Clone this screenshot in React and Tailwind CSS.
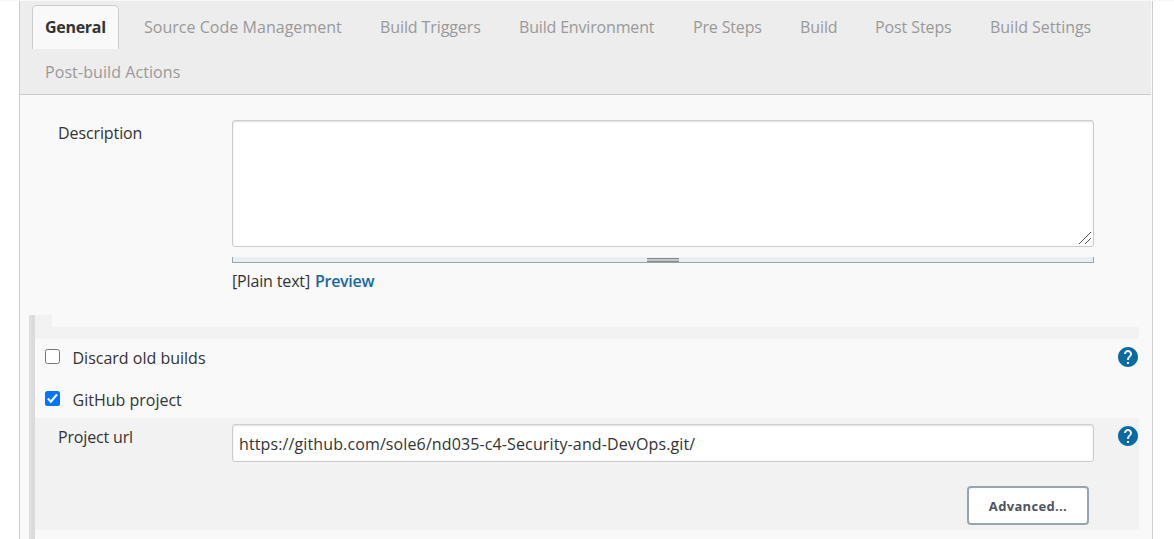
import React from "react";

const tabs = [
  { label: "Source Code Management", cls: "w-[236px] tracking-[0.03px]" },
  { label: "Build Triggers", cls: "w-[139px] tracking-[-0.1px]" },
  { label: "Build Environment", cls: "w-[174px] tracking-[-0.17px]" },
  { label: "Pre Steps", cls: "w-[107px] tracking-[-0.16px]" },
  { label: "Build", cls: "w-[75px] tracking-[-0.1px]" },
  { label: "Post Steps", cls: "w-[115px] tracking-[-0.1px]" },
  { label: "Build Settings", cls: "w-[120px] tracking-[-0.02px]" },
];

function HelpIcon() {
  return (
    <svg className="block size-5 shrink-0" viewBox="2 2 20 20" aria-hidden="true">
      <path
        fill="#0b6aa2"
        d="M12 2C6.48 2 2 6.48 2 12s4.48 10 10 10 10-4.48 10-10S17.52 2 12 2zm1 17h-2v-2h2v2zm2.07-7.75-.9.92C13.45 12.9 13 13.5 13 15h-2v-.5c0-1.1.45-2.1 1.17-2.83l1.24-1.26c.37-.36.59-.86.59-1.41 0-1.1-.9-2-2-2s-2 .9-2 2H8c0-2.21 1.79-4 4-4s4 1.79 4 4c0 .88-.36 1.68-.93 2.25z"
      />
    </svg>
  );
}

function Checkbox({ checked }) {
  return checked ? (
    <span className="flex size-[15px] shrink-0 items-center justify-center rounded-[2.5px] bg-[#0075ff]">
      <svg className="size-[15px]" viewBox="0 0 15 15" fill="none" stroke="#fff" strokeWidth="2.2">
        <path d="M2.9 7.6 5.9 10.7 12 3.4" />
      </svg>
    </span>
  ) : (
    <span className="block size-[15px] shrink-0 rounded-[2.5px] border border-[#767676] bg-white" />
  );
}

export default function App() {
  return (
    <div className="flex h-[539px] w-[1174px] flex-col overflow-hidden bg-white font-['Open_Sans','Noto_Sans',sans-serif] text-[16px] leading-6 text-[#333]">
      <div className="h-px shrink-0 bg-[#f8f8f8]" />
      <main className="ml-[19px] flex h-[538px] w-[1134px] flex-col border-x border-[#ccc] bg-[#f9f9f9]">
        <nav className="mr-px h-[94px] shrink-0 border-b border-[#ccc] bg-[#ededed] pt-1 text-[#999]">
          <div className="flex h-11 whitespace-nowrap">
            <div className="ml-3 h-11 w-[87px] rounded-t-[5px] border border-b-0 border-[#ccc] bg-[#f9f9f9] pl-3 pt-[9px] font-bold tracking-[-0.3px] text-[#333]">
              General
            </div>
            <div className="ml-[25px] flex pt-[10px]">
              {tabs.map((t) => (
                <div key={t.label} className={t.cls}>{t.label}</div>
              ))}
            </div>
          </div>
          <div className="pl-[25px] pt-[11px] tracking-[0.08px]">Post-build Actions</div>
        </nav>

        <section className="flex h-[220px] shrink-0 pt-[25px]">
          <div className="w-[212px] pl-[38px] pt-px tracking-[-0.1px]">Description</div>
          <div className="w-[862px]">
            <div className="flex h-[127px] items-end justify-end rounded-[3px] border border-[#ccc] bg-white p-px shadow-[inset_0_1px_2px_rgba(0,0,0,0.12)]">
              <svg className="size-[14px]" viewBox="0 0 14 14" fill="none" stroke="#555" strokeWidth="1">
                <path d="M1 13 13 1M7 13 13 7" />
              </svg>
            </div>
            <div className="mt-[10px] flex h-[6px] justify-center border border-t-0 border-[#98a5ad] bg-[#e8eef1] pt-px">
              <div className="h-1 w-8 border-y border-[#858b8b] bg-[#c3c7c7]" />
            </div>
            <div className="mt-[6px] flex gap-[5px] whitespace-nowrap">
              <span className="w-[78px] tracking-[-0.15px]">[Plain text]</span>
              <span className="font-semibold tracking-[-0.3px] text-[#1868a0]">Preview</span>
            </div>
          </div>
        </section>

        <section className="ml-[9px] flex h-[224px] w-[1110px] shrink-0">
          <div className="w-[3px] bg-[#dfdfdf]" />
          <div className="w-[3px] bg-[#dbdbdb]" />
          <div className="w-[1104px]">
            <div className="h-6 bg-[#f2f2f2] pl-[17px]">
              <div className="h-3 bg-[#f9f9f9]" />
            </div>
            <div className="flex h-[37px] pl-[10px] pt-2">
              <div className="pt-[2px]"><Checkbox /></div>
              <div className="-mt-px ml-[12.5px] w-[1045.5px] tracking-[0px]">Discard old builds</div>
              <HelpIcon />
            </div>
            <div className="flex h-[42px] pl-[10px] pt-[13px]">
              <div className="pt-[2px]"><Checkbox checked /></div>
              <div className="-mt-px ml-[12.5px] tracking-[0px]">GitHub project</div>
            </div>
            <div className="h-28 bg-[#f2f2f2] pt-[6px]">
              <div className="flex">
                <div className="w-[197px] pl-[23px] pt-px tracking-[-0.16px]">Project url</div>
                <div className="h-[38px] w-[862px] rounded-[3px] border border-[#ccc] bg-white pl-[6px] pt-[7px] tracking-[0.12px] shadow-[inset_0_1px_2px_rgba(0,0,0,0.12)]">
                  https://github.com/sole6/nd035-c4-Security-and-DevOps.git/
                </div>
                <div className="ml-6 pt-[2px]"><HelpIcon /></div>
              </div>
              <div className="flex justify-end pr-[50px] pt-6">
                <button className="h-[39px] w-[122px] rounded-[4px] border-2 border-[#98a5ad] bg-white text-[13px] font-bold tracking-[0.33px] text-[#4d545d]">
                  Advanced...
                </button>
              </div>
            </div>
          </div>
        </section>
      </main>
    </div>
  );
}
